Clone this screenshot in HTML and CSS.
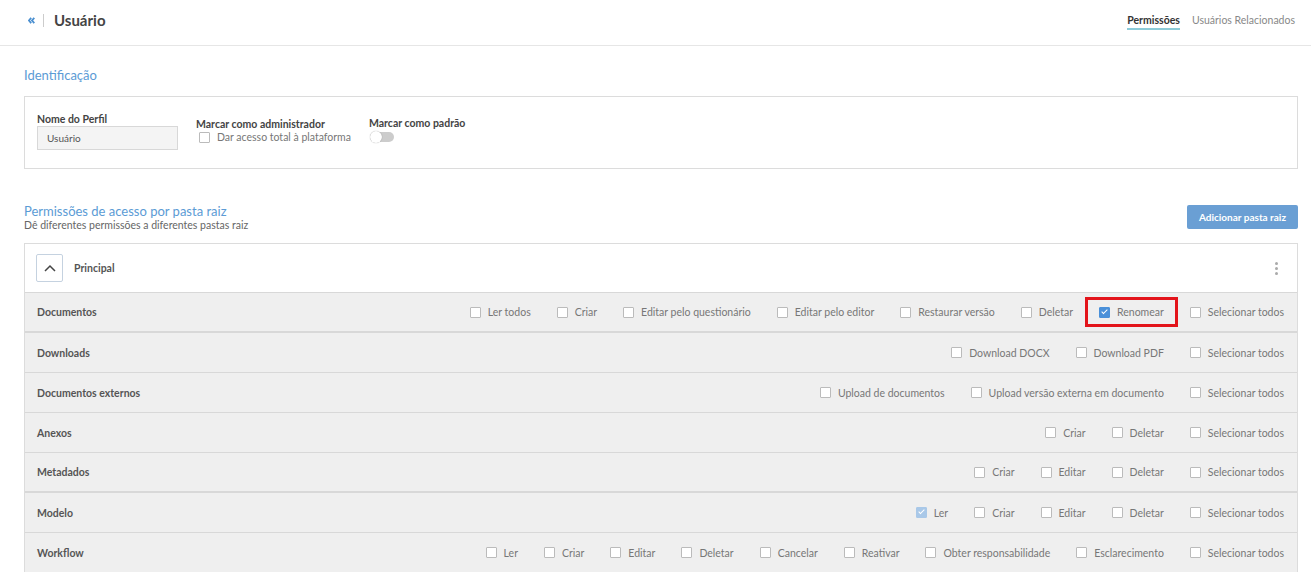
FILE: index.html
```html
<!DOCTYPE html>
<html lang="pt">

<head>
  <meta charset="UTF-8">
  <meta name="viewport" content="width=device-width, initial-scale=1.0">
  <title>Usuário</title>
  <link rel="stylesheet" href="styles.css">
</head>

<body>
  <header class="topbar">
    <div class="topbar-title">
      <a class="back" href="javascript:;">
        <svg width="7" height="7" viewBox="0 0 7 7"><path d="M3.2 0.8 L0.9 3.5 L3.2 6.2 M6.3 0.8 L4 3.5 L6.3 6.2" fill="none" stroke="#4a8fd0" stroke-width="1.8"/></svg>
      </a>
      <span class="sep"></span>
      <h1>Usuário</h1>
    </div>
    <nav class="tabs">
      <a href="javascript:;" class="tab active">Permissões</a>
      <a href="javascript:;" class="tab">Usuários Relacionados</a>
    </nav>
  </header>

  <main class="content">
    <h2 class="section-title">Identificação</h2>
    <div class="card ident">
      <div class="field">
        <label>Nome do Perfil</label>
        <div class="input">Usuário</div>
      </div>
      <div class="field admin">
        <label>Marcar como administrador</label>
        <span class="check"><i class="box"></i>Dar acesso total à plataforma</span>
      </div>
      <div class="field padrao">
        <label>Marcar como padrão</label>
        <span class="toggle"></span>
      </div>
    </div>

    <div class="perm-head">
      <div>
        <h2 class="section-title">Permissões de acesso por pasta raiz</h2>
        <p class="subtitle">Dê diferentes permissões a diferentes pastas raiz</p>
      </div>
      <a href="javascript:;" class="btn">Adicionar pasta raiz</a>
    </div>

    <div class="panel">
      <div class="panel-head">
        <span class="collapse">
          <svg width="12" height="8" viewBox="0 0 12 8"><path d="M1 7 L6 2 L11 7" fill="none" stroke="#444" stroke-width="1.5"/></svg>
        </span>
        <span class="panel-name">Principal</span>
        <span class="kebab"><i></i><i></i><i></i></span>
      </div>

      <div class="row thick">
        <span class="row-name">Documentos</span>
        <div class="opts">
          <span class="check"><i class="box"></i>Ler todos</span>
          <span class="check"><i class="box"></i>Criar</span>
          <span class="check"><i class="box"></i>Editar pelo questionário</span>
          <span class="check"><i class="box"></i>Editar pelo editor</span>
          <span class="check"><i class="box"></i>Restaurar versão</span>
          <span class="check"><i class="box"></i>Deletar</span>
          <span class="check marked"><i class="box on"></i>Renomear</span>
          <span class="check"><i class="box"></i>Selecionar todos</span>
        </div>
      </div>
      <div class="row">
        <span class="row-name">Downloads</span>
        <div class="opts">
          <span class="check"><i class="box"></i>Download DOCX</span>
          <span class="check"><i class="box"></i>Download PDF</span>
          <span class="check"><i class="box"></i>Selecionar todos</span>
        </div>
      </div>
      <div class="row">
        <span class="row-name">Documentos externos</span>
        <div class="opts">
          <span class="check"><i class="box"></i>Upload de documentos</span>
          <span class="check"><i class="box"></i>Upload versão externa em documento</span>
          <span class="check"><i class="box"></i>Selecionar todos</span>
        </div>
      </div>
      <div class="row">
        <span class="row-name">Anexos</span>
        <div class="opts">
          <span class="check"><i class="box"></i>Criar</span>
          <span class="check"><i class="box"></i>Deletar</span>
          <span class="check"><i class="box"></i>Selecionar todos</span>
        </div>
      </div>
      <div class="row thick">
        <span class="row-name">Metadados</span>
        <div class="opts">
          <span class="check"><i class="box"></i>Criar</span>
          <span class="check"><i class="box"></i>Editar</span>
          <span class="check"><i class="box"></i>Deletar</span>
          <span class="check"><i class="box"></i>Selecionar todos</span>
        </div>
      </div>
      <div class="row">
        <span class="row-name">Modelo</span>
        <div class="opts">
          <span class="check"><i class="box on disabled"></i>Ler</span>
          <span class="check"><i class="box"></i>Criar</span>
          <span class="check"><i class="box"></i>Editar</span>
          <span class="check"><i class="box"></i>Deletar</span>
          <span class="check"><i class="box"></i>Selecionar todos</span>
        </div>
      </div>
      <div class="row">
        <span class="row-name">Workflow</span>
        <div class="opts">
          <span class="check"><i class="box"></i>Ler</span>
          <span class="check"><i class="box"></i>Criar</span>
          <span class="check"><i class="box"></i>Editar</span>
          <span class="check"><i class="box"></i>Deletar</span>
          <span class="check"><i class="box"></i>Cancelar</span>
          <span class="check"><i class="box"></i>Reativar</span>
          <span class="check"><i class="box"></i>Obter responsabilidade</span>
          <span class="check"><i class="box"></i>Esclarecimento</span>
          <span class="check"><i class="box"></i>Selecionar todos</span>
        </div>
      </div>
    </div>
  </main>
</body>

</html>
```

FILE: styles.css
```css
html,
body {
  margin: 0;
  padding: 0;
  background: #fff;
  font-family: Lato, "Open Sans", sans-serif;
  color: #555;
  overflow: hidden;
}

h1,
h2,
p {
  margin: 0;
}

a {
  text-decoration: none;
}

.topbar {
  height: 45px;
  border-bottom: 1px solid #e6e6e6;
  display: flex;
  align-items: center;
  justify-content: space-between;
  padding: 0 16px 0 28px;
}

.topbar-title {
  display: flex;
  align-items: center;
  margin-top: -5px;
}

.back {
  display: flex;
  align-items: center;
}

.sep {
  width: 1px;
  height: 13px;
  background: #ccc;
  margin: 0 10px 0 8px;
}

.topbar h1 {
  font-size: 15px;
  font-weight: 700;
  color: #444;
}

.tabs {
  display: flex;
  gap: 12px;
  align-items: center;
  margin-top: -5px;
}

.tab {
  font-size: 10.5px;
  color: #888;
  padding: 4px 0 2px;
  border-bottom: 2px solid transparent;
}

.tab.active {
  color: #333;
  font-weight: 700;
  border-bottom-color: #8ccbd8;
}

.content {
  padding: 21px 13px 0 24px;
}

.section-title {
  font-size: 13px;
  font-weight: 400;
  color: #5b9bd5;
}

.card {
  border: 1px solid #dcdcdc;
  margin-top: 13px;
}

.ident {
  display: flex;
  gap: 18px;
  padding: 16px 12px 18px 12px;
}

.field {
  display: flex;
  flex-direction: column;
}

.field label {
  font-size: 10.5px;
  font-weight: 700;
  color: #444;
  line-height: 13px;
}

.field.admin {
  padding-top: 5px;
}

.field.padrao {
  padding-top: 4px;
}

.field.admin .check {
  margin-left: 3px;
  font-size: 10.5px;
  color: #777;
}

.input {
  width: 130px;
  height: 22px;
  line-height: 22px;
  background: #f4f4f4;
  border: 1px solid #d8d8d8;
  font-size: 10px;
  color: #555;
  padding-left: 9px;
}

.toggle {
  display: block;
  width: 24px;
  height: 10px;
  border-radius: 6px;
  background: #ccc;
  margin: 2px 0 0 1px;
  position: relative;
}

.toggle::after {
  content: "";
  position: absolute;
  left: 0;
  top: -1px;
  width: 12px;
  height: 12px;
  border-radius: 50%;
  background: #fff;
  box-shadow: 0 0 1px rgba(0, 0, 0, 0.4);
}

.perm-head {
  display: flex;
  justify-content: space-between;
  align-items: flex-end;
  margin-top: 35px;
}

.perm-head .section-title {
  font-size: 13px;
  line-height: 15px;
}

.subtitle {
  font-size: 10.5px;
  color: #666;
  line-height: 12px;
}

.btn {
  background: #6a9fd4;
  color: #fff;
  font-size: 10px;
  font-weight: 700;
  padding: 0 12px;
  height: 24px;
  line-height: 24px;
  border-radius: 2px;
  margin-bottom: 2px;
}

.panel {
  margin-top: 12px;
  border: 1px solid #dcdcdc;
  border-bottom: 0;
}

.panel-head {
  height: 48px;
  display: flex;
  align-items: center;
  padding: 0 19px 0 11px;
  background: #fff;
}

.collapse {
  width: 25px;
  height: 26px;
  border: 1px solid #c5d2e0;
  border-radius: 2px;
  display: flex;
  align-items: center;
  justify-content: center;
}

.panel-name {
  margin-left: 11px;
  font-size: 10.5px;
  font-weight: 700;
  color: #555;
  flex: 1;
}

.kebab {
  display: flex;
  flex-direction: column;
  gap: 2px;
}

.kebab i {
  width: 3px;
  height: 3px;
  border-radius: 50%;
  background: #aaa;
}

.row {
  height: 39px;
  background: #efefef;
  border-top: 1px solid #d8d8d8;
  display: flex;
  align-items: center;
  justify-content: space-between;
  padding: 0 13px 0 12px;
}

.row.thick {
  border-bottom: 1px solid #d8d8d8;
  height: 38px;
}

.row-name {
  font-size: 10.5px;
  font-weight: 700;
  color: #555;
}

.opts {
  display: flex;
  gap: 26px;
}

.check {
  display: inline-flex;
  align-items: center;
  font-size: 10.5px;
  color: #777;
  position: relative;
}

.box {
  width: 9px;
  height: 9px;
  border: 1px solid #bbb;
  background: #fff;
  border-radius: 1px;
  margin-right: 7px;
  position: relative;
}

.box.on {
  background: #4a90d9;
  border-color: #4a90d9;
}

.box.on::after {
  content: "";
  position: absolute;
  left: 3px;
  top: 0px;
  width: 2px;
  height: 5px;
  border: solid #fff;
  border-width: 0 1.5px 1.5px 0;
  transform: rotate(45deg);
}

.box.disabled {
  background: #a9c8e8;
  border-color: #a9c8e8;
}

.marked::after {
  content: "";
  position: absolute;
  top: -9px;
  bottom: -9px;
  left: -14px;
  right: -14px;
  border: 3px solid #e3141b;
}
```
